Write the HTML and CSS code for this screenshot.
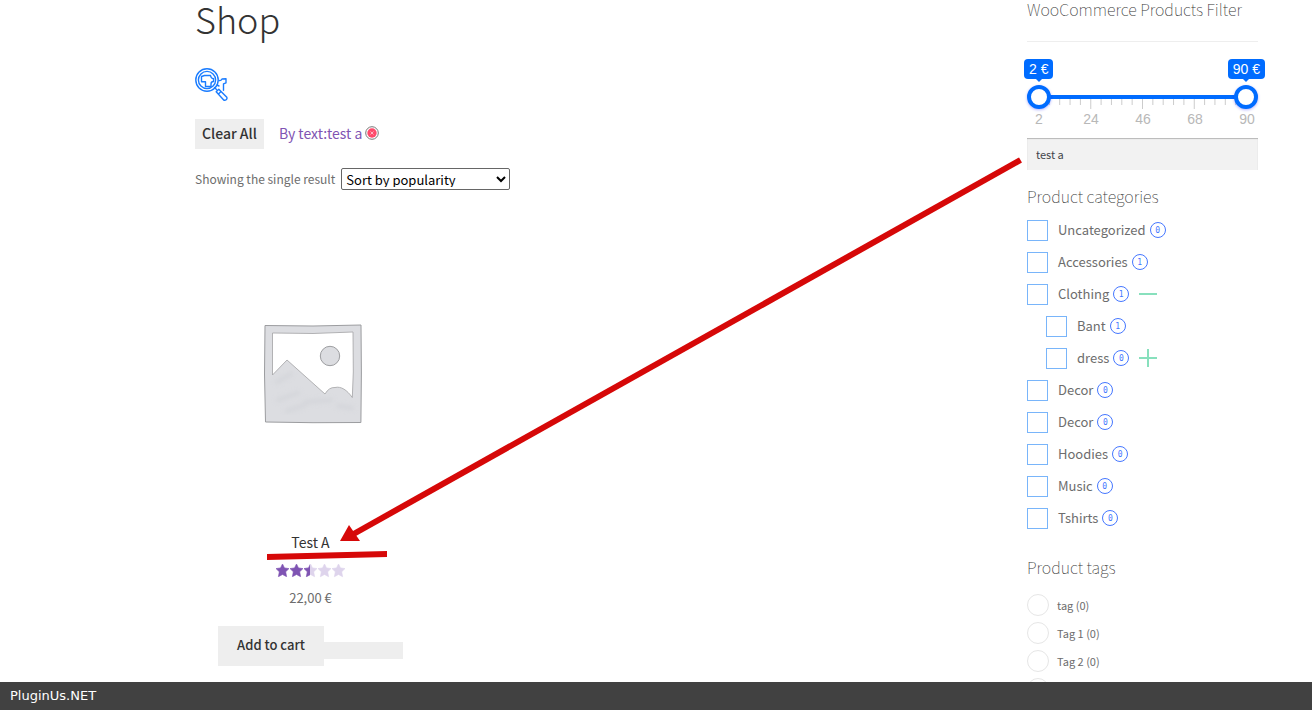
FILE: index.html
```html
<!DOCTYPE html>
<html lang="en">
<head>
<meta charset="utf-8">
<title>Shop</title>
<link rel="stylesheet" href="styles.css">
</head>
<body>
<div class="page">
  <main class="shop">
    <h1 class="shop-title">Shop</h1>
    <a class="search-toggle" href="#" aria-label="Product search">
      <svg width="33" height="33" viewBox="0 0 33 33" fill="none" stroke="#1a7cff" stroke-width="1.4" stroke-linejoin="round" stroke-linecap="round">
        <circle cx="12" cy="12" r="11.2"/>
        <circle cx="12" cy="12" r="8.600"/>
        <path d="M6.500 13.800V8.500l3-1h6q.5 3 3 3.200v2.800q-2.500 0-2.500 2.500v2.500h-5.500v-4.700z"/>
        <path d="M19.500 19.500l2 2M21.200 23.800l2.600-2.600 8 8q.6 1.600-.6 2.500t-2.500.3zM23.500 26l2.500-2.500"/>
        <path d="M24 12.500q2 .5 3-1.500l4-.2v4l-2.500 1v6.500M22 17l2 1"/>
      </svg>
    </a>
    <div class="active-filters">
      <button class="clear-all" type="button">Clear All</button>
      <a class="active-filter" href="#">By text:test a<svg width="14" height="14" viewBox="0 0 14 14"><circle cx="7" cy="7" r="6.300" fill="#fff" stroke="#777"/><circle cx="7" cy="7" r="4.700" fill="#ff4a6b"/><path d="M5.500 5.500l3 3m0-3l-3 3" stroke="#ffb3c0"/></svg></a>
    </div>
    <div class="sorting">
      <label for="order">Showing the single result</label>
      <select id="order" class="order"><option>Sort by popularity</option></select>
    </div>
    <article class="product">
      <svg class="product-image" width="100" height="100" viewBox="0 0 100 100" role="img" aria-label="Placeholder">
        <defs><filter id="soft"><feGaussianBlur stdDeviation="2"/></filter></defs>
        <path d="M2 1.500L50 2l48-1 .4 48-.5 49.500L50 98.700 2.500 98 1.500 50z" fill="#dcdde1" stroke="#9c9da0"/>
        <path d="M9.500 9L50 9.500 90 8l.3 40-1 25.500C84 66 78 62 72 63.500q-6-.5-10 6.500L24 36 9.500 51z" fill="#fff" stroke="#a2a2a5" stroke-width=".8"/>
        <circle cx="67" cy="32" r="9.700" fill="#dcdde1" stroke="#9c9da0"/>
        <path d="M14 58l14-8M15 76l20-7M42 78l26-2M24 87l18-6M75 82l14 2" stroke="#cfd0d6" stroke-width="5" stroke-linecap="round" opacity=".5" filter="url(#soft)"/>
      </svg>
      <h2 class="product-title">Test A</h2>
      <svg class="stars" width="69" height="13" viewBox="0 0 69 13" role="img" aria-label="Rated 2.5 out of 5">
        <defs><path id="star" d="M6.500 0l2 3.900 4.500.7-3.300 3.200.9 4.900-4.100-2.200-4.100 2.200.9-4.900L0 4.600l4.500-.7z"/><clipPath id="rated"><path d="M0 0h34v13H0z"/></clipPath></defs>
        <g fill="#ded4ec" stroke="#ded4ec" stroke-width=".6"><use href="#star" x="28"/><use href="#star" x="42"/><use href="#star" x="56"/></g>
        <g fill="#7f54b3" stroke="#7f54b3" stroke-width=".6" clip-path="url(#rated)"><use href="#star"/><use href="#star" x="14"/><use href="#star" x="28"/></g>
      </svg>
      <p class="price">22,00 €</p>
      <div class="product-actions">
        <button class="add-to-cart" type="button">Add to cart</button>
        <span class="action-blank"></span>
      </div>
    </article>
  </main>

  <aside class="sidebar">
    <h2 class="widget-title">WooCommerce Products Filter</h2>
    <div class="price-filter">
      <div class="bubbles"><output class="bubble">2 €</output><output class="bubble">90 €</output></div>
      <div class="range">
        <div class="ticks">
        <svg class="tick-marks" width="100%" height="10">
          <g stroke="#ccc">
            <line x1="5%" x2="5%" y2="6"/><line x1="10%" x2="10%" y2="6"/><line x1="15%" x2="15%" y2="6"/><line x1="20%" x2="20%" y2="6"/>
            <line x1="25%" x2="25%" y2="10"/>
            <line x1="30%" x2="30%" y2="6"/><line x1="35%" x2="35%" y2="6"/><line x1="40%" x2="40%" y2="6"/><line x1="45%" x2="45%" y2="6"/>
            <line x1="50%" x2="50%" y2="10"/>
            <line x1="55%" x2="55%" y2="6"/><line x1="60%" x2="60%" y2="6"/><line x1="65%" x2="65%" y2="6"/><line x1="70%" x2="70%" y2="6"/>
            <line x1="75%" x2="75%" y2="10"/>
            <line x1="80%" x2="80%" y2="6"/><line x1="85%" x2="85%" y2="6"/><line x1="90%" x2="90%" y2="6"/><line x1="95%" x2="95%" y2="6"/>
          </g>
        </svg>
        </div>
        <input class="range-input" type="range" min="2" max="90" value="2" aria-label="Minimum price">
        <input class="range-input" type="range" min="2" max="90" value="90" aria-label="Maximum price">
      </div>
      <div class="scale"><span>2</span><span>24</span><span>46</span><span>68</span><span>90</span></div>
    </div>
    <input class="text-filter" type="text" value="test a" aria-label="Search by text">

    <h2 class="widget-title categories-title">Product categories</h2>
    <ul class="categories">
      <li class="category"><label><input type="checkbox">Uncategorized</label><span class="count">0</span></li>
      <li class="category"><label><input type="checkbox">Accessories</label><span class="count">1</span></li>
      <li class="category"><label><input type="checkbox">Clothing</label><span class="count">1</span><button class="toggle" type="button" aria-label="Collapse Clothing"><svg width="18" height="18"><path d="M0 9h18" stroke="#88e0bd" stroke-width="2"/></svg></button></li>
      <li class="category child"><label><input type="checkbox">Bant</label><span class="count">1</span></li>
      <li class="category child"><label><input type="checkbox">dress</label><span class="count">0</span><button class="toggle" type="button" aria-label="Expand dress"><svg width="18" height="18"><path d="M0 9h18M9 0v18" stroke="#88e0bd" stroke-width="2"/></svg></button></li>
      <li class="category"><label><input type="checkbox">Decor</label><span class="count">0</span></li>
      <li class="category"><label><input type="checkbox">Decor</label><span class="count">0</span></li>
      <li class="category"><label><input type="checkbox">Hoodies</label><span class="count">0</span></li>
      <li class="category"><label><input type="checkbox">Music</label><span class="count">0</span></li>
      <li class="category"><label><input type="checkbox">Tshirts</label><span class="count">0</span></li>
    </ul>

    <h2 class="widget-title tags-title">Product tags</h2>
    <ul class="tags">
      <li><label class="tag"><input type="checkbox">tag (0)</label></li>
      <li><label class="tag"><input type="checkbox">Tag 1 (0)</label></li>
      <li><label class="tag"><input type="checkbox">Tag 2 (0)</label></li>
      <li><label class="tag"><input type="checkbox" aria-label="More tags"></label></li>
    </ul>
  </aside>

  <svg class="annotation" width="1312" height="682" viewBox="0 0 1312 682" aria-hidden="true">
    <path d="M1020.500 160L350 536" stroke="#d60808" stroke-width="6"/>
    <path d="M340 541l9-16 11 16z" fill="#d60808"/>
    <path d="M267 554l120-3v6l-120 3z" fill="#d60808"/>
  </svg>
</div>
<footer class="credit">PluginUs.NET</footer>
</body>
</html>
```

FILE: styles.css
```css
* { box-sizing: border-box; }

body {
  margin: 0;
  height: 100vh;
  display: flex;
  flex-direction: column;
  overflow: hidden;
  background: #fff;
  color: #6d6d6d;
  font: 13px/20px "Noto Sans CJK SC", "Open Sans", sans-serif;
}

h1, h2, p, ul { margin: 0; padding: 0; }
ul { list-style: none; }
a { text-decoration: none; }
button, select, input { font: inherit; }
button { border: 0; padding: 0; cursor: pointer; }

.page {
  position: relative;
  flex: 1;
  min-height: 0;
  overflow: hidden;
  display: flex;
  justify-content: space-between;
  padding: 0 54px 0 195px;
}

.shop { flex: 1; }

.shop-title {
  font-size: 36px;
  line-height: 36px;
  font-weight: 300;
  color: #333;
}

.search-toggle { display: block; width: 33px; height: 33px; margin-top: 32px; }
.search-toggle svg { display: block; }

.active-filters {
  display: flex;
  align-items: center;
  gap: 15px;
  margin-top: 18px;
  font-size: 14px;
}
.clear-all {
  height: 30px;
  padding: 0 7px 2px;
  background: #eee;
  color: #333;
  font-weight: 500;
}
.active-filter {
  display: flex;
  align-items: center;
  gap: 3px;
  padding-bottom: 2px;
  color: #7f54b3;
}

.sorting { display: flex; align-items: center; gap: 6px; margin-top: 19px; font-size: 12px; }
.order {
  width: 169px;
  height: 22px;
  padding: 0 0 2px;
  border: 1px solid #666;
  border-radius: 2px;
  background: #fff;
  color: #000;
  font-size: 13px;
}

.product {
  width: 231px;
  margin-top: 134px;
  display: flex;
  flex-direction: column;
  align-items: center;
}
.product-image { margin-left: 4px; }
.product-title {
  margin-top: 108px;
  font-size: 14px;
  line-height: 20px;
  font-weight: 400;
  color: #333;
}
.stars { margin-top: 12px; overflow: visible; }
.price { margin-top: 11px; }
.product-actions { display: flex; align-items: flex-end; margin-top: 18px; }
.add-to-cart {
  height: 40px;
  padding: 0 19px 2px;
  background: #eee;
  color: #333;
  font-weight: 500;
}
.action-blank { width: 79px; height: 17px; margin-bottom: 7px; background: #eee; }

.sidebar { width: 231px; flex: none; }

.widget-title {
  font-size: 16px;
  line-height: 18px;
  font-weight: 100;
  color: #333;
  white-space: nowrap;
}

.price-filter {
  margin-top: 23px;
  padding-top: 17px;
  border-top: 1px solid #eee;
  font: 14px/20px "Liberation Sans", Arial, sans-serif;
}
.bubbles { display: flex; justify-content: space-between; margin: 0 -7px 0 -3px; }
.bubble {
  position: relative;
  padding: 0 5px;
  border-radius: 4px;
  background: #006cff;
  color: #fff;
}
.bubble::after {
  content: "";
  position: absolute;
  top: 100%;
  left: 50%;
  margin-left: -3px;
  border: 3px solid transparent;
  border-top-color: #006cff;
  border-bottom: 0;
}

.range {
  display: grid;
  grid-template-columns: minmax(0, 1fr);
  align-items: center;
  height: 24px;
  margin-top: 6px;
  background: linear-gradient(#006cff, #006cff) center / calc(100% - 24px) 4px no-repeat;
}
.range > * { grid-area: 1 / 1; }
.ticks { padding: 14px 12px 0; align-self: start; }
.tick-marks { display: block; overflow: visible; }
.range-input {
  appearance: none;
  width: 100%;
  height: 24px;
  margin: 0;
  background: none;
  pointer-events: none;
}
.range-input::-webkit-slider-thumb {
  appearance: none;
  width: 24px;
  height: 24px;
  border: 4px solid #006cff;
  border-radius: 50%;
  background: #fff;
  box-shadow: 0 1px 3px rgba(0, 0, 255, .3);
  pointer-events: auto;
}
.scale { display: flex; justify-content: space-between; margin: 0 -15px 0 -14px; color: #b8b8b8; }
.scale span { width: 52px; text-align: center; }

.text-filter {
  display: block;
  width: 100%;
  height: 32px;
  margin-top: 9px;
  padding: 0 9px;
  border: 0;
  background: #f2f2f2;
  box-shadow: inset 0 1px 1px rgba(0, 0, 0, .25);
  color: #43454b;
  font-size: 11px;
}

.categories-title { margin-top: 17px; }
.categories { margin-top: 9px; }
.category { display: flex; align-items: center; height: 32px; }
.category label { display: flex; align-items: center; gap: 10px; }
.category input {
  appearance: none;
  width: 21px;
  height: 21px;
  margin: 0;
  border: 1px solid #79b5fa;
  background: #fff;
}
.child { padding-left: 19px; }
.count {
  width: 16px;
  height: 16px;
  margin-left: 4px;
  border: 1px solid #4577ff;
  border-radius: 50%;
  color: #4577ff;
  font: 8px/16px "DejaVu Sans Mono", monospace;
  text-align: center;
}
.toggle { height: 18px; margin-left: 10px; background: none; }
.toggle svg { display: block; }

.tags-title { margin-top: 24px; }
.tags { margin-top: 15px; }
.tag { display: flex; align-items: center; gap: 8px; height: 28px; font-size: 11px; }
.tag input {
  appearance: none;
  width: 22px;
  height: 22px;
  margin: 0;
  border: 1px solid #e6e6e6;
  border-radius: 50%;
  background: #fff;
}

.annotation { position: absolute; top: 0; left: 0; pointer-events: none; }

.credit {
  height: 28px;
  padding: 0 10px;
  background: #414141;
  color: #fff;
  font: 13px/28px "DejaVu Sans", Verdana, sans-serif;
}
```
